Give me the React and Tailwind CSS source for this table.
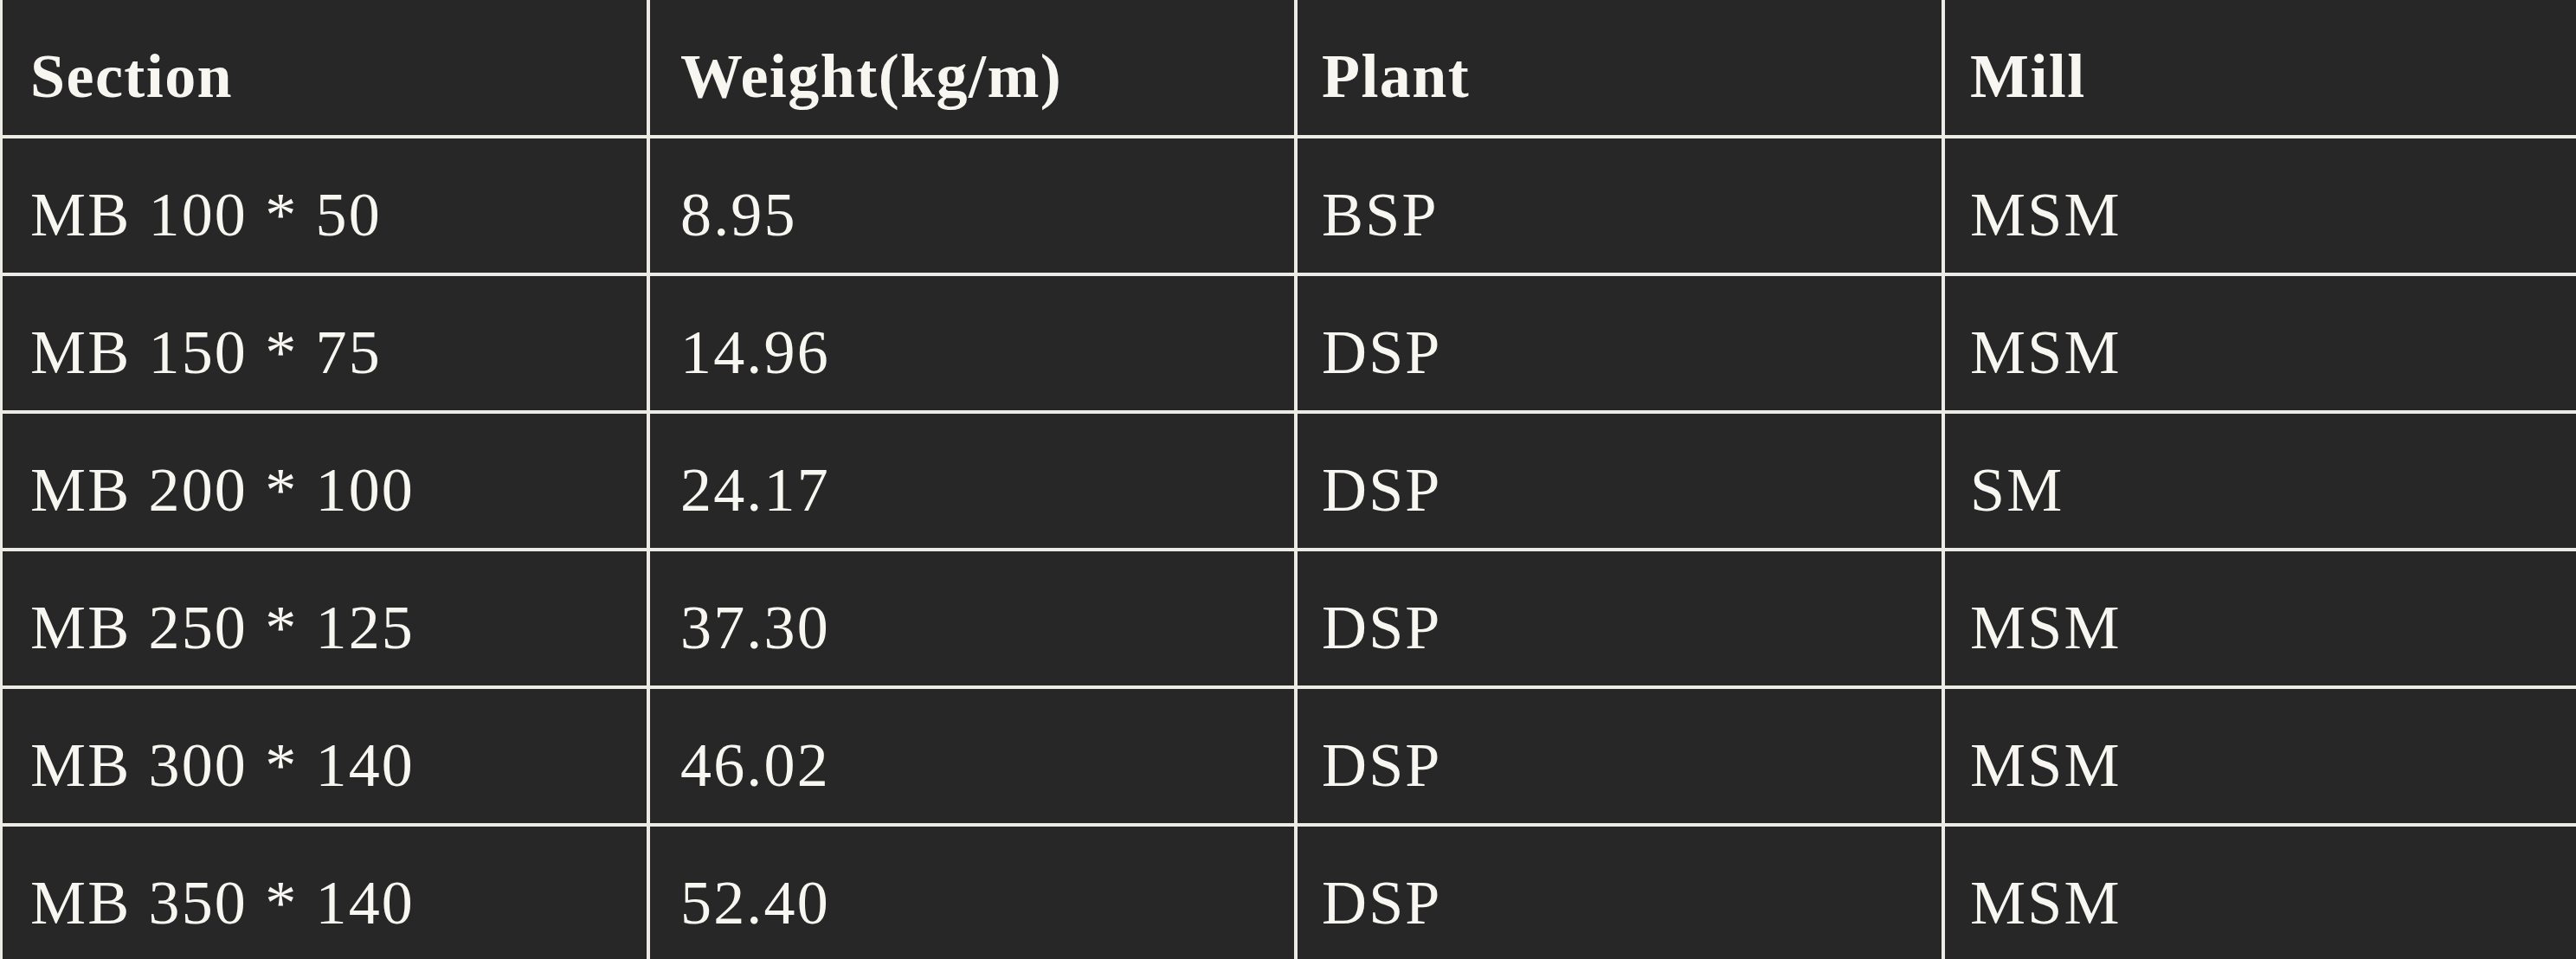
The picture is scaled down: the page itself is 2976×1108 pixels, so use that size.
import React from "react";

const header = ["Section", "Weight(kg/m)", "Plant", "Mill"];
const rows = [
  ["MB 100 * 50", "8.95", "BSP", "MSM"],
  ["MB 150 * 75", "14.96", "DSP", "MSM"],
  ["MB 200 * 100", "24.17", "DSP", "SM"],
  ["MB 250 * 125", "37.30", "DSP", "MSM"],
  ["MB 300 * 140", "46.02", "DSP", "MSM"],
  ["MB 350 * 140", "52.40", "DSP", "MSM"],
];

const pads = ["pl-[32px]", "pl-[35px]", "pl-[28px]", "pl-[29px]"];

function Cell({ children, col, bold }) {
  return (
    <div
      className={`flex items-center bg-[#272727] pt-[20px] ${pads[col]} text-[72px] leading-none text-[#f7f6f1] whitespace-nowrap ${
        bold ? "font-bold tracking-[0.02em]" : "font-normal tracking-[0.03em]"
      }`}
    >
      {children}
    </div>
  );
}

export default function App() {
  return (
    <div
      className="w-[2976px] h-[1108px] overflow-hidden bg-[#272727]"
      style={{ fontFamily: '"Liberation Serif", "Times New Roman", serif' }}
    >
      <div className="grid w-[2992px] grid-cols-[744px_744px_744px_744px] grid-rows-[156px_155px_155px_155px_155px_155px_155px] gap-[4px] bg-[#ecebe6] pl-[3px]">
        {header.map((h, i) => (
          <Cell key={h} col={i} bold>
            {h}
          </Cell>
        ))}
        {rows.map((r, ri) =>
          r.map((c, ci) => (
            <Cell key={`${ri}-${ci}`} col={ci}>
              {c}
            </Cell>
          ))
        )}
      </div>
    </div>
  );
}
